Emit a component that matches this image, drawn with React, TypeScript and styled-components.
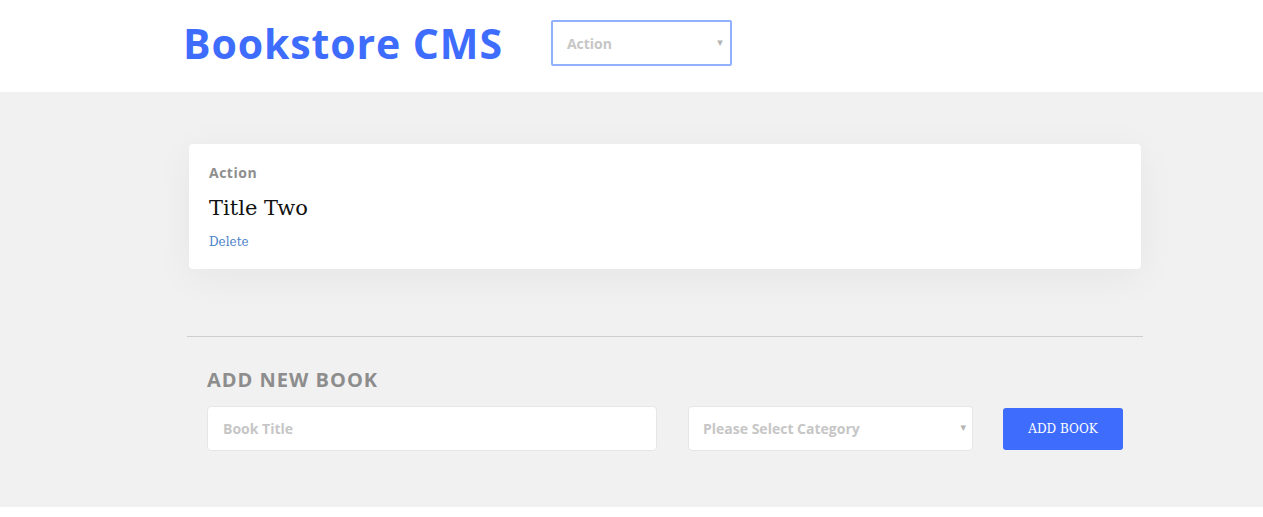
import styled, { createGlobalStyle } from "styled-components";

const GlobalStyle = createGlobalStyle`
  body {
    margin: 0;
    background: #fff;
    font-family: "Open Sans", "DejaVu Sans", sans-serif;
  }
`;

const SANS = `"Open Sans", "DejaVu Sans", sans-serif`;
const SERIF = `"DejaVu Serif", "Liberation Serif", serif`;

const books = [{ id: 1, category: "Action", title: "Title Two" }];

function App() {
  return (
    <>
      <GlobalStyle />
      <Header>
        <Logo>Bookstore CMS</Logo>
        <FilterSelect>
          <SelectLabel>Action</SelectLabel>
          <Caret>▾</Caret>
        </FilterSelect>
      </Header>
      <Main>
        <Container>
          <BookList>
            {books.map((book) => (
              <BookCard key={book.id}>
                <Category>{book.category}</Category>
                <BookTitle>{book.title}</BookTitle>
                <DeleteLink>Delete</DeleteLink>
              </BookCard>
            ))}
          </BookList>
          <Divider />
          <Form>
            <FormTitle>ADD NEW BOOK</FormTitle>
            <FormRow>
              <TitleInput placeholder="Book Title" />
              <CategorySelect>
                <SelectLabel>Please Select Category</SelectLabel>
                <Caret>▾</Caret>
              </CategorySelect>
              <AddButton>ADD BOOK</AddButton>
            </FormRow>
          </Form>
        </Container>
      </Main>
    </>
  );
}

export default App;

const Header = styled.header`
  height: 92px;
  box-sizing: border-box;
  display: flex;
  align-items: flex-start;
  padding: 20px 0 0 183px;
  gap: 48px;
  background: #fff;
`;

const Logo = styled.h1`
  margin: 0;
  height: 46px;
  line-height: 46px;
  font-family: ${SANS};
  font-size: 41px;
  font-weight: 700;
  color: #3e6cfd;
  letter-spacing: 0.9px;
`;

const FilterSelect = styled.div`
  box-sizing: border-box;
  width: 181px;
  height: 46px;
  border: 2px solid #91b1ff;
  border-radius: 2px;
  display: flex;
  align-items: center;
  justify-content: space-between;
  padding: 0 7px 0 14px;
`;

const SelectLabel = styled.span`
  font-family: ${SANS};
  font-size: 14px;
  font-weight: 700;
  color: #c6c6c6;
`;

const Caret = styled.span`
  font-size: 11px;
  color: #b4b4b4;
  margin-top: -4px;
`;

const Main = styled.main`
  background: #f1f1f1;
  padding: 52px 0 56px;
`;

const Container = styled.div`
  width: 956px;
  margin-left: 187px;
`;

const BookList = styled.div`
  padding: 0 2px;
`;

const BookCard = styled.div`
  background: #fff;
  border-radius: 4px;
  padding: 20px;
  height: 125px;
  box-sizing: border-box;
  box-shadow: 0 8px 40px rgba(0, 0, 0, 0.05);
`;

const Category = styled.div`
  font-family: ${SANS};
  font-size: 14px;
  font-weight: 700;
  color: #8e8e8e;
  line-height: 18px;
  letter-spacing: 0.5px;
`;

const BookTitle = styled.div`
  font-family: ${SERIF};
  font-size: 21px;
  color: #111;
  margin-top: 13px;
  line-height: 26px;
`;

const DeleteLink = styled.a`
  display: block;
  font-family: ${SERIF};
  font-size: 12px;
  color: #4a81c9;
  margin-top: 14px;
  cursor: pointer;
`;

const Divider = styled.hr`
  margin: 67px 0 0;
  border: none;
  border-top: 1px solid #cdcdcd;
`;

const Form = styled.section`
  padding: 29px 20px 0;
`;

const FormTitle = styled.h2`
  margin: 0;
  font-family: ${SANS};
  font-size: 20px;
  font-weight: 700;
  color: #8d8d8d;
  letter-spacing: 1px;
`;

const FormRow = styled.div`
  display: flex;
  align-items: center;
  margin-top: 13px;
`;

const TitleInput = styled.input`
  box-sizing: border-box;
  width: 450px;
  height: 45px;
  border: 1px solid #e6e6e6;
  border-radius: 4px;
  padding: 0 15px;
  font-family: ${SANS};
  font-size: 14px;
  font-weight: 700;
  outline: none;
  &::placeholder {
    color: #c6c6c6;
  }
`;

const CategorySelect = styled.div`
  box-sizing: border-box;
  width: 285px;
  height: 45px;
  margin-left: 31px;
  background: #fff;
  border: 1px solid #e6e6e6;
  border-radius: 4px;
  display: flex;
  align-items: center;
  justify-content: space-between;
  padding: 0 6px 0 14px;
`;

const AddButton = styled.button`
  width: 120px;
  height: 42px;
  margin-left: 30px;
  border: none;
  border-radius: 3px;
  background: #3e6cfd;
  color: #fff;
  font-family: ${SERIF};
  font-size: 12px;
  cursor: pointer;
`;
